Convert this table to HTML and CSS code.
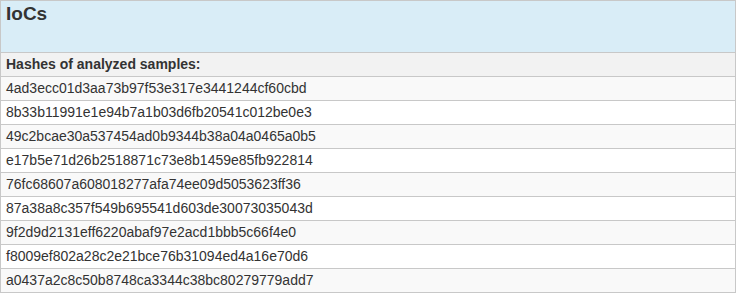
FILE: index.html
```html
<!DOCTYPE html>
<html>
<head>
<meta charset="utf-8">
<link rel="stylesheet" href="styles.css">
</head>
<body>
<table class="ioc">
  <thead>
    <tr><th class="title">IoCs</th></tr>
  </thead>
  <tbody>
    <tr class="sub"><td>Hashes of analyzed samples:</td></tr>
    <tr><td>4ad3ecc01d3aa73b97f53e317e3441244cf60cbd</td></tr>
    <tr><td>8b33b11991e1e94b7a1b03d6fb20541c012be0e3</td></tr>
    <tr><td>49c2bcae30a537454ad0b9344b38a04a0465a0b5</td></tr>
    <tr><td>e17b5e71d26b2518871c73e8b1459e85fb922814</td></tr>
    <tr><td>76fc68607a608018277afa74ee09d5053623ff36</td></tr>
    <tr><td>87a38a8c357f549b695541d603de30073035043d</td></tr>
    <tr><td>9f2d9d2131eff6220abaf97e2acd1bbb5c66f4e0</td></tr>
    <tr><td>f8009ef802a28c2e21bce76b31094ed4a16e70d6</td></tr>
    <tr><td>a0437a2c8c50b8748ca3344c38bc80279779add7</td></tr>
  </tbody>
</table>
</body>
</html>
```

FILE: styles.css
```css
html, body {
  margin: 0;
  padding: 0;
  background: #ffffff;
}
.ioc {
  width: 736px;
  border-collapse: collapse;
  font-family: "Liberation Sans", Arial, sans-serif;
  color: #333333;
  font-size: 14px;
}
.ioc th, .ioc td {
  border: 1px solid #c8c8c8;
  text-align: left;
  padding: 0 5px;
}
.ioc .title {
  background: #d9edf7;
  height: 52px;
  font-size: 19px;
  font-weight: bold;
  vertical-align: top;
  padding-top: 2px;
  line-height: 22px;
  box-sizing: border-box;
}
.ioc td {
  height: 23px;
  line-height: 23px;
  box-sizing: content-box;
  padding-top: 0;
  padding-bottom: 0;
}
.ioc tbody tr:nth-child(even) td {
  background: #f9f9f9;
}
.ioc tbody tr:nth-child(odd) td {
  background: #ffffff;
}
.ioc tbody tr.sub td {
  background: #f2f2f2;
  font-weight: bold;
}
```
